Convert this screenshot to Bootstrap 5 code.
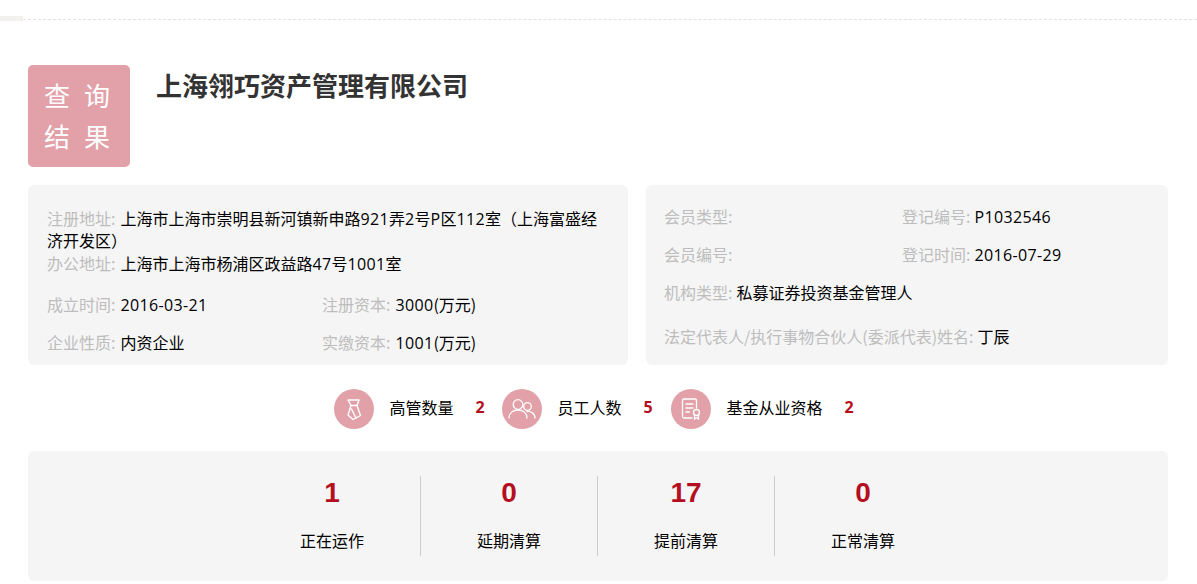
<!DOCTYPE html>
<html lang="zh-CN">
<head>
<meta charset="utf-8">
<title>查询结果</title>
<link rel="stylesheet" href="https://cdn.jsdelivr.net/npm/bootstrap@5.3.0/dist/css/bootstrap.min.css">
<style>
html,body{height:584px;overflow:hidden;background:#fff}
body{font-family:"Noto Sans CJK SC","Liberation Sans",sans-serif;font-size:16px;color:#000;line-height:24px}
.top-rule{height:5px;margin-top:16px}
.top-tab{width:23px;height:5px;background:#f2f1ed}
.top-line{flex:1;height:1px;margin-top:3px;border-top:1px dashed #e2e2e2}
.page-main{padding:0 29px 0 28px}
.head-row{margin-top:44px}
.q-badge{width:102px;height:102px;background:#e2a1a8;border-radius:5px;color:#fff;font-size:26px;line-height:41px;letter-spacing:14px;padding:9px 0 0 16px}
.co-name{font-size:26px;font-weight:700;color:#333;line-height:32px;margin:4px 0 0 26px}
.info-row{margin-top:18px;gap:18px}
.info-box{background:#f5f5f5;border-radius:6px;height:180px}
.box-l{width:600px;padding:23px 19px 0}
.box-r{width:522px;padding:19px 18px 0}
.lbl{color:#bdbdbd;margin-right:5px}
.box-r .lbl{margin-right:4px}
.lat{font-family:"Open Sans","Noto Sans CJK SC",sans-serif;letter-spacing:.35px}
.addr{line-height:21px;margin-bottom:0}
.addr + .addr{margin-top:2px}
.two-col{display:grid;grid-template-columns:275px 1fr}
.box-l .two-col{margin-top:17px;row-gap:13px}
.box-r .two-col{grid-template-columns:238px 1fr;row-gap:13px}
.kv-line{margin:13px 0 0}
.kv-gap{margin-top:20px}
.count-row{margin-top:24px;height:40px;padding-right:8px}
.count-item{width:169px}
.count-item.narrow{width:168px}
.count-item.wide{width:auto}
.c-icon{width:40px;height:40px;border-radius:50%;background:#e2a1a8;flex:none}
.c-label{margin-left:15px;margin-top:-4px}
.c-num{font-family:"Open Sans",sans-serif;font-weight:700;color:#b50f1f;margin-left:22px;margin-top:-4px}
.stats-box{margin-top:22px;background:#f5f5f5;border-radius:6px;height:130px;padding-top:25px}
.stat-item{width:177px;height:80px;text-align:center;border-right:1px solid #ccc}
.stat-item:last-child{border-right-color:transparent}
.stat-num{font-family:"Liberation Sans",sans-serif;font-weight:700;font-size:28px;line-height:34px;color:#b50f1f}
.stat-label{margin-top:18px;line-height:24px}
</style>
</head>
<body>
<div class="top-rule d-flex"><div class="top-tab"></div><div class="top-line"></div></div>
<div class="page-main">
  <div class="head-row d-flex align-items-start">
    <div class="q-badge">查询<br>结果</div>
    <h1 class="co-name">上海翎巧资产管理有限公司</h1>
  </div>
  <div class="info-row d-flex">
    <div class="info-box box-l">
      <p class="addr"><span class="lbl">注册地址:</span>上海市上海市崇明县新河镇新申路<span class="lat">921</span>弄<span class="lat">2</span>号<span class="lat">P</span>区<span class="lat">112</span>室（上海富盛经济开发区）</p>
      <p class="addr"><span class="lbl">办公地址:</span>上海市上海市杨浦区政益路<span class="lat">47</span>号<span class="lat">1001</span>室</p>
      <div class="two-col">
        <div><span class="lbl">成立时间:</span><span class="lat">2016-03-21</span></div>
        <div><span class="lbl">注册资本:</span><span class="lat">3000</span>(万元)</div>
        <div><span class="lbl">企业性质:</span>内资企业</div>
        <div><span class="lbl">实缴资本:</span><span class="lat">1001</span>(万元)</div>
      </div>
    </div>
    <div class="info-box box-r">
      <div class="two-col">
        <div><span class="lbl">会员类型:</span></div>
        <div><span class="lbl">登记编号:</span><span class="lat">P1032546</span></div>
        <div><span class="lbl">会员编号:</span></div>
        <div><span class="lbl">登记时间:</span><span class="lat">2016-07-29</span></div>
      </div>
      <p class="kv-line"><span class="lbl">机构类型:</span>私募证券投资基金管理人</p>
      <p class="kv-line kv-gap"><span class="lbl">法定代表人/执行事物合伙人(委派代表)姓名:</span>丁辰</p>
    </div>
  </div>
  <div class="count-row d-flex justify-content-center">
    <div class="count-item narrow d-flex align-items-center">
      <div class="c-icon d-flex align-items-center justify-content-center">
        <svg width="24" height="24" viewBox="0 0 24 24" fill="none" stroke="#fff" stroke-width="1.400" stroke-linejoin="round" stroke-linecap="round"><path d="M6 3h11l-2 5.500H9z"/><path d="M9 8.500 6 18l5 4.500 7.500-4L15 8.500"/><path d="M9.500 12l4.500 9"/></svg>
      </div>
      <span class="c-label">高管数量</span><span class="c-num">2</span>
    </div>
    <div class="count-item d-flex align-items-center">
      <div class="c-icon d-flex align-items-center justify-content-center">
        <svg width="30" height="24" viewBox="0 0 30 24" fill="none" stroke="#fff" stroke-width="1.300" stroke-linecap="round"><circle cx="11" cy="7.500" r="4.800"/><path d="M2 21c0-5 4-8 9-8s9 3 9 8"/><circle cx="20.500" cy="9.500" r="3.800"/><path d="M20 14.500c4-.5 8 2 8 6.500"/></svg>
      </div>
      <span class="c-label">员工人数</span><span class="c-num">5</span>
    </div>
    <div class="count-item wide d-flex align-items-center">
      <div class="c-icon d-flex align-items-center justify-content-center">
        <svg width="24" height="24" viewBox="0 0 24 24" fill="none" stroke="#fff" stroke-width="1.300" stroke-linecap="round"><path d="M13 21H5a1.500 1.500 0 0 1-1.500-1.500v-16A1.500 1.500 0 0 1 5 2h11a1.500 1.500 0 0 1 1.500 1.500V11"/><path d="M7 7h7M7 11h7M7 15h3.500"/><circle cx="17.500" cy="15.500" r="3"/><path d="M15.500 18v4l2-1.200 2 1.200v-4"/></svg>
      </div>
      <span class="c-label">基金从业资格</span><span class="c-num">2</span>
    </div>
  </div>
  <div class="stats-box d-flex justify-content-center">
    <div class="stat-item"><div class="stat-num">1</div><div class="stat-label">正在运作</div></div>
    <div class="stat-item"><div class="stat-num">0</div><div class="stat-label">延期清算</div></div>
    <div class="stat-item"><div class="stat-num">17</div><div class="stat-label">提前清算</div></div>
    <div class="stat-item"><div class="stat-num">0</div><div class="stat-label">正常清算</div></div>
  </div>
</div>
</body>
</html>
